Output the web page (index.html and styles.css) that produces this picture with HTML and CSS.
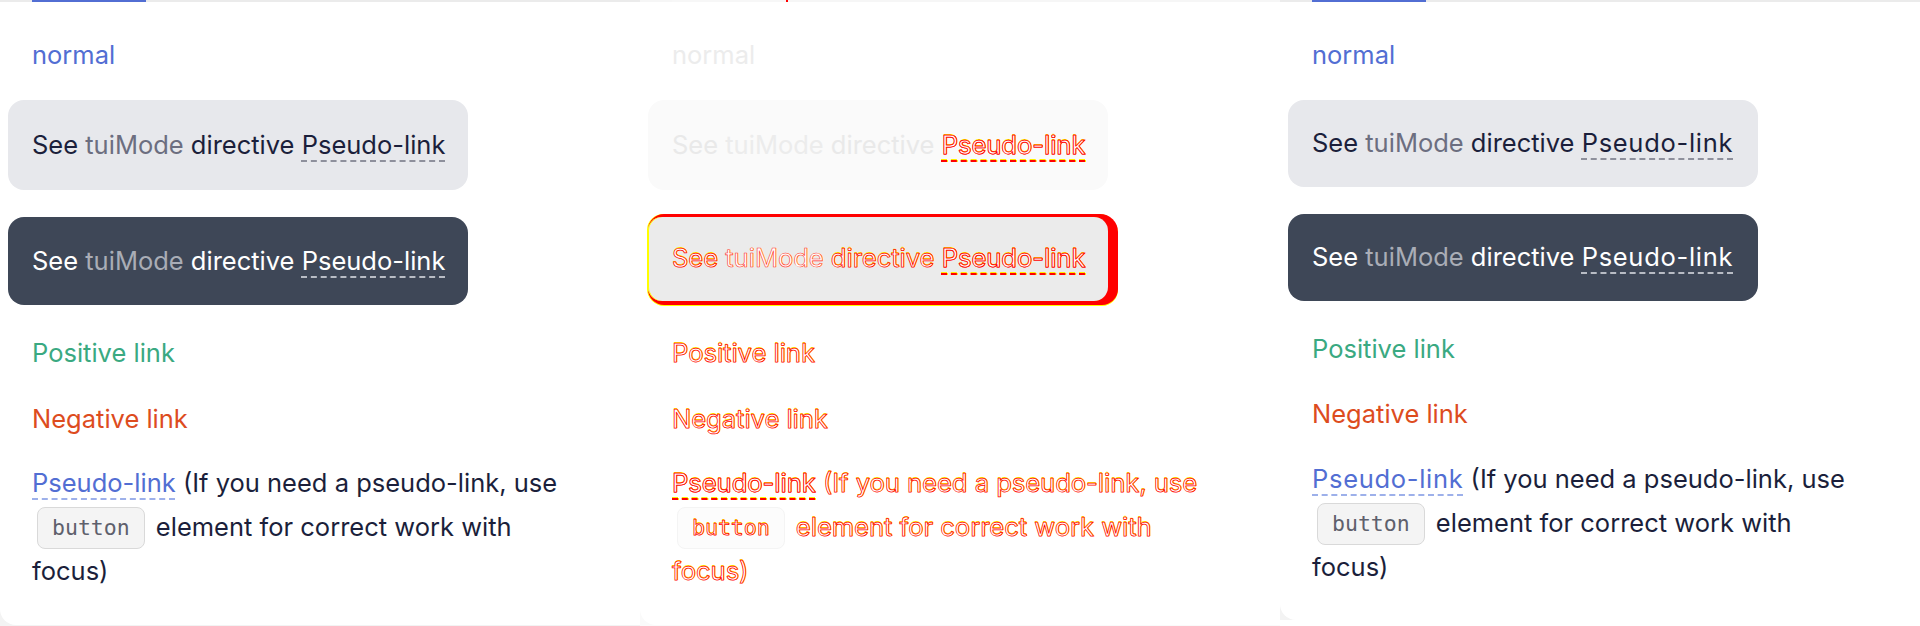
FILE: index.html
```html
<!DOCTYPE html>
<html lang="en">
<head>
<meta charset="utf-8">
<title>Link diff</title>
<link rel="stylesheet" href="styles.css">
</head>
<body>
<div class="stage">

  <section class="panel panel--expected">
    <div class="tabbar"><span class="tab"></span></div>
    <div class="card">
      <p class="row row--first"><a class="link">normal</a></p>
      <div class="mode mode--light">See <span class="muted">tuiMode</span> directive <span class="pseudo">Pseudo-link</span></div>
      <div class="mode mode--dark">See <span class="muted">tuiMode</span> directive <span class="pseudo">Pseudo-link</span></div>
      <p class="row row--pos"><a class="link link--positive">Positive link</a></p>
      <p class="row row--neg"><a class="link link--negative">Negative link</a></p>
      <p class="para"><span class="link pseudo pseudo--blue">Pseudo-link</span> (If you need a pseudo-link, use <code class="code">button</code> element for correct work with focus)</p>
    </div>
  </section>

  <section class="panel panel--diff">
    <div class="tabbar"><span class="tab"></span></div>
    <div class="card">
      <p class="row row--first"><a class="link">normal</a></p>
      <div class="mode mode--light">See <span class="muted">tuiMode</span> directive <span class="pseudo diffword">Pseudo-link</span></div>
      <div class="diffbox">
        <div class="diffbox__inner"><span class="difftext">See <span class="difftext--soft">tuiMode</span> directive <span class="pseudo">Pseudo-link</span></span></div>
      </div>
      <p class="row row--pos"><span class="difftext">Positive link</span></p>
      <p class="row row--neg"><span class="difftext">Negative link</span></p>
      <p class="para para--diff difftext"><span class="pseudo">Pseudo-link</span> (If you need a pseudo-link, use <code class="code">button</code> element for correct work with focus)</p>
    </div>
  </section>

  <section class="panel panel--actual">
    <div class="tabbar"><span class="tab"></span></div>
    <div class="card">
      <p class="row row--first"><a class="link">normal</a></p>
      <div class="mode mode--light">See <span class="muted">tuiMode</span> directive <span class="pseudo">Pseudo-link</span></div>
      <div class="mode mode--dark">See <span class="muted">tuiMode</span> directive <span class="pseudo">Pseudo-link</span></div>
      <p class="row row--pos"><a class="link link--positive">Positive link</a></p>
      <p class="row row--neg"><a class="link link--negative">Negative link</a></p>
      <p class="para"><span class="link pseudo pseudo--blue">Pseudo-link</span> (If you need a pseudo-link, use <code class="code">button</code> element for correct work with focus)</p>
    </div>
  </section>

</div>
</body>
</html>
```
FILE: styles.css
```css
* { box-sizing: border-box; margin: 0; padding: 0; }

body {
  margin: 0;
  width: 1920px;
  height: 626px;
  overflow: hidden;
  background: #ffffff;
  font-family: Inter, "Noto Sans", sans-serif;
  font-size: 25.5px;
  line-height: 42px;
  color: #1b1f3b;
}

.stage { display: flex; }

.panel {
  width: 640px;
  height: 626px;
  overflow: hidden;
  background: #f3f3f3;
  display: flex;
  flex-direction: column;
}

.tabbar {
  height: 2px;
  flex-shrink: 0;
  background: #ebebeb;
  padding-left: 32px;
  display: flex;
}
.tab { width: 114px; background: #526ed3; }

.card {
  height: 623px;
  margin-right: -24px;
  background: #ffffff;
  border-bottom-left-radius: 16px;
  padding: 32px 0 0 8px;
}

.row { padding-left: 24px; }
.row--pos { margin-top: 27px; }
.row--neg { margin-top: 24px; }

.link { color: #526ed3; text-decoration: none; }
.link--positive { color: #3aa981; }
.link--negative { color: #dd4c1e; }

.mode {
  width: 460px;
  height: 90px;
  margin-top: 24px;
  padding: 24px;
  border-radius: 16px;
  white-space: nowrap;
}
.mode--light { background: #e7e8ec; color: #1b1f3b; }
.mode--light .muted { color: #6c6e80; }
.mode--dark { background: #3e4757; color: #ffffff; height: 88px; padding-top: 23px; margin-top: 27px; }
.mode--dark .muted { color: #a9adb6; }

.pseudo {
  text-decoration: underline dashed;
  text-decoration-color: #8e909c;
  text-decoration-thickness: 1.5px;
  text-underline-offset: 6px;
}
.mode--dark .pseudo { text-decoration-color: #b8bcc4; }
.pseudo--blue { text-decoration-color: #9db0ea; }

.para {
  margin-top: 21px;
  padding-left: 24px;
  width: 570px;
  line-height: 44px;
}

.code {
  display: inline-block;
  margin: 2px 4px 0 5px;
  padding: 0 14px;
  height: 42px;
  line-height: 39px;
  vertical-align: top;
  font-family: "DejaVu Sans Mono", "Liberation Mono", monospace;
  font-size: 21.5px;
  color: #5e606c;
  background: #f4f4f4;
  border: 1.5px solid #d9d9d9;
  border-radius: 8px;
}

/* ---- actual (right) panel: slightly different rendering ---- */
.panel--actual .mode--light { width: 470px; height: 87px; padding-top: 22px; }
.panel--actual .mode--dark { width: 470px; height: 87px; padding-top: 22px; margin-top: 27px; }
.panel--actual .pseudo { letter-spacing: 0.7px; }
.panel--actual .row--pos { margin-top: 27px; }
.panel--actual .row--neg { margin-top: 23px; }
.panel--actual .para { margin-top: 22px; }
.panel--actual .card { height: 618px; }
.panel--actual { background: linear-gradient(#f3f3f3, #f3f3f3) no-repeat 0 0 / 30px 620px, #ffffff; }

/* ---- diff (middle) panel ---- */
.panel--diff { background: #fafafa; }
.panel--diff .tab { background: #f7f7f7; box-shadow: 2px 0 0 #ff0000; }
.panel--diff .tabbar { background: #f6f6f6; }
.panel--diff .link { color: #ececec; }
.panel--diff .mode--light { background: #fafafa; color: #e9e9e9; }
.panel--diff .mode--light .muted { color: #ececec; }

.difftext, .diffword {
  color: #ffffff;
  -webkit-text-stroke: 0.75px #ff0000;
  text-shadow: 1px 0 0 #ffee00, 0 -1px 0 #ffee00;
}
.difftext--soft {
  -webkit-text-stroke: 0.6px #ff3030;
  text-shadow: 1px 0 0 #fff36a;
}
.diffword,
.panel--diff .pseudo {
  text-decoration: underline dashed #ff0000;
  text-decoration-thickness: 2px;
  text-underline-offset: 6px;
}

.diffbox {
  width: 470px;
  margin-top: 24px;
  padding: 3px 10px 4px 0;
  background: #ff0000;
  border-radius: 16px 18px 16px 16px;
  box-shadow: -1px 0 0 #ffff00, 0 1px 0 #ffff00;
}
.diffbox__inner {
  height: 84px;
  padding: 20px 24px;
  background: #ebebeb;
  border-radius: 14px;
  box-shadow: inset 1px 0 0 #ffff00;
  white-space: nowrap;
}

.para--diff .code {
  background: #fcfcfc;
  border-color: #f4f4f4;
  color: #ffffff;
  -webkit-text-stroke: 0.75px #ff0000;
}
```
